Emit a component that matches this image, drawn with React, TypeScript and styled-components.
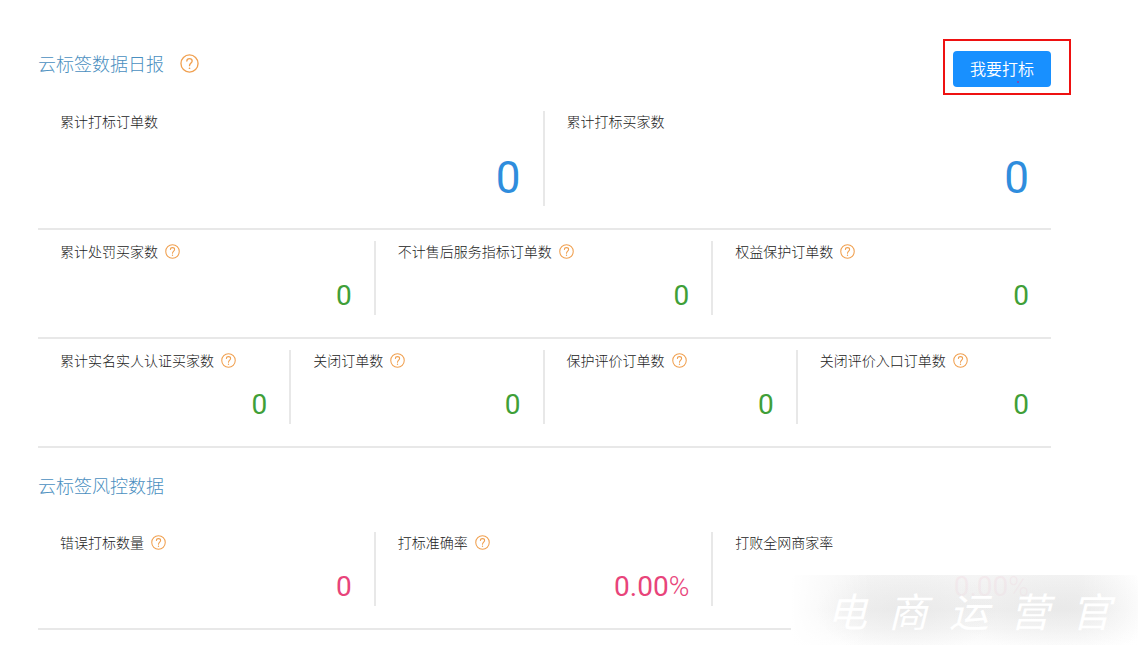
import React from "react";
import styled, { createGlobalStyle } from "styled-components";

const GlobalStyle = createGlobalStyle`
  *, *::before, *::after { box-sizing: border-box; }
  body {
    margin: 0;
    background: #fff;
    color: #505050;
    font-family: Roboto, "Noto Sans CJK SC", sans-serif;
  }
`;

const Page = styled.main`
  position: relative;
  overflow: hidden;
  padding: 51px 87px 18px 38px;
`;

const Header = styled.header`
  display: flex;
  align-items: flex-start;
  justify-content: space-between;
  margin-bottom: 24px;
`;

const TitleGroup = styled.div`
  display: flex;
  align-items: center;
  gap: 16px;
`;

const Title = styled.h2`
  margin: 0;
  font-family: "Noto Sans CJK SC", sans-serif;
  font-size: 18px;
  line-height: 24px;
  font-weight: 300;
  color: #4a8fc0;
`;

const RiskTitle = styled(Title)`
  margin: 25px 0 35px;
`;

const Highlight = styled.div`
  position: relative;

  &::before {
    content: "";
    position: absolute;
    inset: -12px -20px -8px -10px;
    border: 2px solid #ee1111;
    pointer-events: none;
  }

  &::after {
    content: "";
    position: absolute;
    right: 32px;
    bottom: 4px;
    width: 2px;
    height: 2px;
    background: #7a4fb8;
    pointer-events: none;
  }
`;

const PrimaryButton = styled.button`
  display: block;
  height: 36px;
  padding: 0 17px 2px;
  border: 0;
  border-radius: 4px;
  background: #1890ff;
  color: #fff;
  font-family: "Noto Sans CJK SC", sans-serif;
  font-size: 16px;
  line-height: 34px;
  font-weight: 350;
  cursor: pointer;
`;

const HelpButton = styled.button<{ $size: number }>`
  display: block;
  flex: none;
  width: ${(p) => p.$size}px;
  height: ${(p) => p.$size}px;
  padding: 0;
  border: 0;
  background: none;
  color: #f0a050;
  cursor: pointer;

  svg {
    display: block;
    width: 100%;
    height: 100%;
  }
`;

const StatRow = styled.dl<{ $columns: number }>`
  display: grid;
  grid-template-columns: repeat(${(p) => p.$columns}, minmax(0, 1fr));
  margin: 0;
  padding: 11px 0 22px;
  border-bottom: 2px solid #e8e8e8;

  &:first-of-type {
    padding-top: 0;
  }
`;

const Cell = styled.div<{ $large: boolean }>`
  display: flex;
  flex-direction: column;
  justify-content: space-between;
  min-height: ${(p) => (p.$large ? 95 : 74)}px;
  padding: 0 22px;
  border-right: 2px solid #e8e8e8;

  &:last-child {
    border-right: 0;
  }
`;

const Label = styled.dt`
  display: flex;
  align-items: center;
  gap: 7px;
  font-family: "Noto Sans CJK SC", sans-serif;
  font-size: 14px;
  line-height: 20px;
  font-weight: 300;
  color: #222;
  white-space: nowrap;
`;

const tones = { blue: "#2f8ddd", green: "#3f9f38", pink: "#e8447a" };
type Tone = keyof typeof tones;

const Value = styled.dd<{ $tone: Tone; $large: boolean }>`
  margin: 0;
  text-align: right;
  color: ${(p) => tones[p.$tone]};
  font-size: ${(p) => (p.$large ? 44 : 28)}px;
  line-height: ${(p) => (p.$large ? 56 : 38)}px;
`;

const Percent = styled.span`
  font-weight: 300;
`;

const Watermark = styled.div`
  position: absolute;
  right: 0;
  bottom: 3px;
  display: flex;
  align-items: center;
  gap: 21px;
  width: 347px;
  height: 70px;
  padding-left: 36px;
  background:
    radial-gradient(ellipse 90px 46px at 116px 36px, rgba(222, 222, 222, 0.4), rgba(222, 222, 222, 0)),
    radial-gradient(ellipse 110px 46px at 270px 32px, rgba(222, 222, 222, 0.4), rgba(222, 222, 222, 0)),
    linear-gradient(90deg, #fff 0, rgba(255, 255, 255, 0) 80px, rgba(255, 255, 255, 0) 290px, #fff 100%),
    linear-gradient(180deg, rgba(244, 244, 244, 0.94) 0, rgba(240, 240, 240, 0.96) 50%, rgba(253, 253, 253, 0.98) 100%);
  color: #fff;
  font-family: "Noto Sans CJK SC", sans-serif;
  font-size: 40px;
  line-height: 70px;
  font-style: italic;
  font-weight: 400;
  pointer-events: none;
`;

function Help({ label, size = 15 }: { label: string; size?: number }) {
  return (
    <HelpButton type="button" aria-label={`${label}说明`} $size={size}>
      <svg viewBox="0 0 20 20" fill="none" stroke="currentColor" strokeWidth="1.4" strokeLinecap="round">
        <circle cx="10" cy="10" r="9" />
        <path d="M7.2 7.4C7.2 5.8 8.4 4.8 10 4.8s2.8 1 2.8 2.5c0 2-2.8 2.4-2.8 5" />
        <circle cx="10" cy="15" r="0.9" fill="currentColor" stroke="none" />
      </svg>
    </HelpButton>
  );
}

type StatItem = { label: string; value: string; help?: boolean };

function Stats({ items, tone, large = false }: { items: StatItem[]; tone: Tone; large?: boolean }) {
  return (
    <StatRow $columns={items.length}>
      {items.map(({ label, value, help }) => (
        <Cell key={label} $large={large}>
          <Label>
            {label}
            {help && <Help label={label} />}
          </Label>
          <Value $tone={tone} $large={large}>
            {value.replace("%", "")}
            {value.endsWith("%") && <Percent>%</Percent>}
          </Value>
        </Cell>
      ))}
    </StatRow>
  );
}

const totals: StatItem[] = [
  { label: "累计打标订单数", value: "0" },
  { label: "累计打标买家数", value: "0" },
];

const protections: StatItem[] = [
  { label: "累计处罚买家数", value: "0", help: true },
  { label: "不计售后服务指标订单数", value: "0", help: true },
  { label: "权益保护订单数", value: "0", help: true },
];

const closures: StatItem[] = [
  { label: "累计实名实人认证买家数", value: "0", help: true },
  { label: "关闭订单数", value: "0", help: true },
  { label: "保护评价订单数", value: "0", help: true },
  { label: "关闭评价入口订单数", value: "0", help: true },
];

const risks: StatItem[] = [
  { label: "错误打标数量", value: "0", help: true },
  { label: "打标准确率", value: "0.00%", help: true },
  { label: "打败全网商家率", value: "0.00%" },
];

export default function App() {
  return (
    <>
      <GlobalStyle />
      <Page>
        <section>
          <Header>
            <TitleGroup>
              <Title>云标签数据日报</Title>
              <Help label="云标签数据日报" size={19} />
            </TitleGroup>
            <Highlight>
              <PrimaryButton type="button">我要打标</PrimaryButton>
            </Highlight>
          </Header>
          <Stats items={totals} tone="blue" large />
          <Stats items={protections} tone="green" />
          <Stats items={closures} tone="green" />
        </section>
        <section>
          <RiskTitle>云标签风控数据</RiskTitle>
          <Stats items={risks} tone="pink" />
        </section>
        <Watermark>
          {Array.from("电商运营官").map((char) => (
            <span key={char}>{char}</span>
          ))}
        </Watermark>
      </Page>
    </>
  );
}
